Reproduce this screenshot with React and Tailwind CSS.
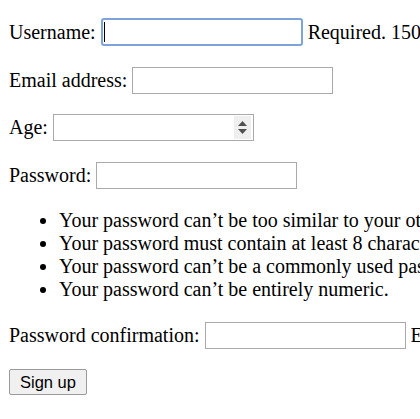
import React from 'react';

const Field = ({ children }) => (
    <div className="flex items-center h-[28px] gap-[5px] whitespace-nowrap">{children}</div>
);

const inputCls = "w-[201px] h-[27px] border border-[#a9a9a9] bg-white px-[3px] font-['Liberation_Sans',sans-serif] text-[16px] outline-none shrink-0";

const rules = [
    'Your password can’t be too similar to your other personal information.',
    'Your password must contain at least 8 characters.',
    'Your password can’t be a commonly used password.',
    'Your password can’t be entirely numeric.',
];

export default function App() {
    return (
        <div className="w-[420px] h-[419px] overflow-hidden bg-white">
            <form className="w-[1200px] pl-[9px] pt-[18px] font-['Liberation_Serif',serif] text-[20px] leading-[23px] text-black">
                <Field>
                    <label htmlFor="id_username">Username:</label>
                    {/* focused input with caret */}
                    <span className="relative shrink-0">
                        <input id="id_username" type="text" className="w-[202px] h-[28px] border-2 border-[#7ea3dc] rounded-[3px] bg-white px-[3px] outline-none font-['Liberation_Sans',sans-serif] text-[16px]" />
                        <span className="absolute left-[3px] top-[4px] w-px h-[20px] bg-black"></span>
                    </span>
                    <span>Required. 150 characters or fewer. Letters, digits and @/./+/-/_ only.</span>
                </Field>

                <div className="mt-[20px]">
                    <Field>
                        <label htmlFor="id_email">Email address:</label>
                        <input id="id_email" type="email" className={inputCls} />
                    </Field>
                </div>

                <div className="mt-[19px]">
                    <Field>
                        <label htmlFor="id_age">Age:</label>
                        <span className="relative shrink-0">
                            <input id="id_age" type="text" className={inputCls} />
                            {/* spinner */}
                            <span className="absolute right-[3px] top-[2px] w-[17px] h-[23px] bg-[#efefef] flex flex-col items-center justify-center gap-[3px]">
                                <svg width="9" height="5" viewBox="0 0 9 5"><path d="M4.5 0L9 5H0z" fill="#505050" /></svg>
                                <svg width="9" height="5" viewBox="0 0 9 5"><path d="M0 0h9L4.5 5z" fill="#505050" /></svg>
                            </span>
                        </span>
                    </Field>
                </div>

                <div className="mt-[20px]">
                    <Field>
                        <label htmlFor="id_password1">Password:</label>
                        <input id="id_password1" type="password" className={inputCls} />
                    </Field>
                </div>

                <ul className="mt-[20px] pl-[50px] list-disc whitespace-nowrap">
                    {rules.map((r) => (
                        <li key={r}>{r}</li>
                    ))}
                </ul>

                <div className="mt-[20px]">
                    <Field>
                        <label htmlFor="id_password2">Password confirmation:</label>
                        <input id="id_password2" type="password" className={inputCls} />
                        <span>Enter the same password as before, for verification.</span>
                    </Field>
                </div>

                <button type="submit" className="mt-[20px] w-[78px] h-[26px] border border-[#9a9a9a] rounded-[2px] bg-[#f0f0f0] font-['Liberation_Sans',sans-serif] text-[16.5px] leading-none text-black">
                    Sign up
                </button>
            </form>
        </div>
    );
}
